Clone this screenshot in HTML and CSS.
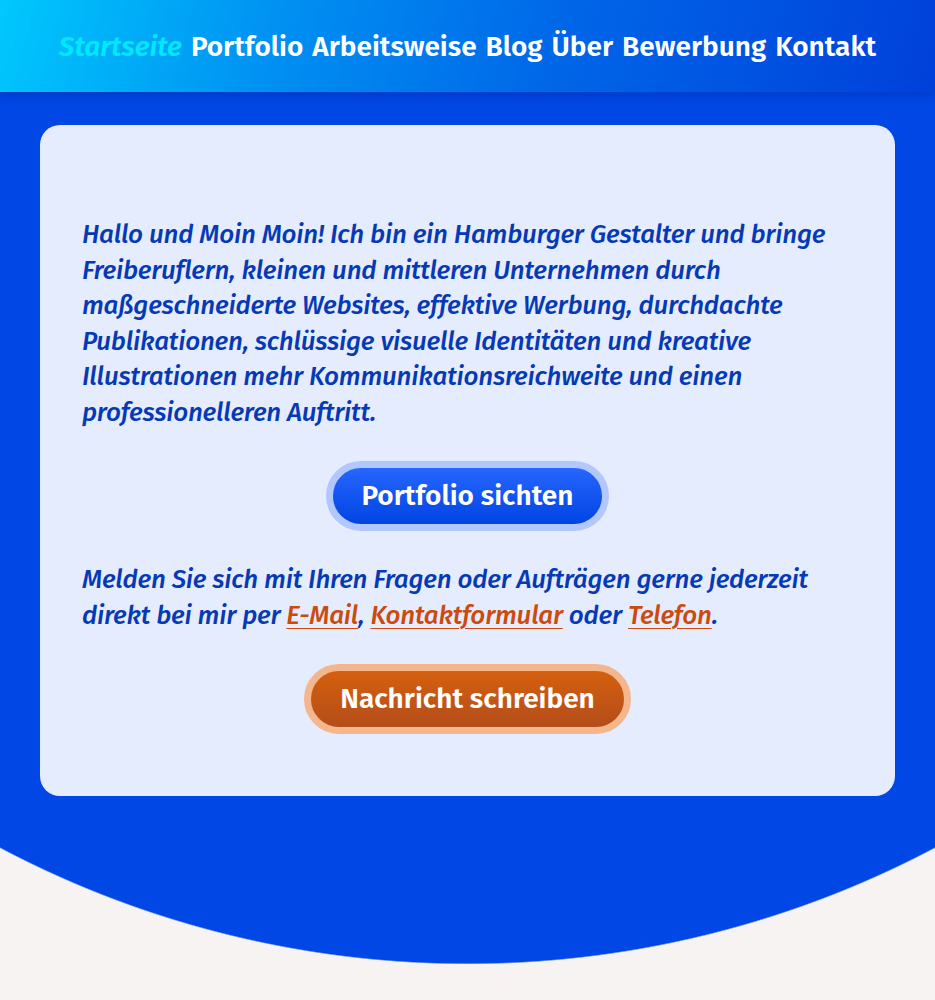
FILE: index.html
```html
<!DOCTYPE html>
<html lang="de">
<head>
<meta charset="utf-8">
<title>Startseite</title>
<link rel="stylesheet" href="styles.css">
</head>
<body>
<header class="site-header">
  <nav class="main-nav">
    <a class="nav-link is-active" href="#">Startseite</a>
    <a class="nav-link" href="#">Portfolio</a>
    <a class="nav-link" href="#">Arbeitsweise</a>
    <a class="nav-link" href="#">Blog</a>
    <a class="nav-link" href="#">Über</a>
    <a class="nav-link" href="#">Bewerbung</a>
    <a class="nav-link" href="#">Kontakt</a>
  </nav>
</header>
<main class="hero">
  <section class="intro-card">
    <p class="intro-text">Hallo und Moin Moin! Ich bin ein Hamburger Gestalter und bringe Freiberuflern, kleinen und mittleren Unternehmen durch maßgeschneiderte Websites, effektive Werbung, durchdachte Publikationen, schlüssige visuelle Identitäten und kreative Illustrationen mehr Kommunikationsreichweite und einen professionelleren Auftritt.</p>
    <a class="btn btn-blue" href="#">Portfolio sichten</a>
    <p class="intro-text">Melden Sie sich mit Ihren Fragen oder Aufträgen gerne jederzeit direkt bei mir per <a class="text-link" href="#">E-Mail</a>, <a class="text-link" href="#">Kontaktformular</a> oder <a class="text-link" href="#">Telefon</a>.</p>
    <a class="btn btn-orange" href="#">Nachricht schreiben</a>
  </section>
</main>
</body>
</html>
```

FILE: styles.css
```css
* { box-sizing: border-box; }

html, body {
  margin: 0;
  padding: 0;
}

body {
  background: #f7f3f2;
  font-family: "Fira Sans", "Open Sans", "Noto Sans", sans-serif;
}

.site-header {
  position: relative;
  z-index: 2;
  height: 92px;
  background: linear-gradient(105deg, #00c8fd 0%, #0090f2 30%, #0066e8 60%, #0040da 100%);
  box-shadow: 0 3px 10px rgba(0, 20, 90, 0.25);
  display: flex;
  align-items: center;
  justify-content: center;
}

.main-nav {
  display: flex;
  gap: 9px;
}

.nav-link {
  color: #ffffff;
  text-decoration: none;
  font-size: 28px;
  font-weight: 600;
}

.nav-link.is-active {
  color: #00e8ff;
  font-style: italic;
}

.hero {
  min-height: 908px;
  padding: 33px 40px;
  background: radial-gradient(circle 1000px at 50% -128px, #0047e5 999px, #f7f3f2 1000.5px);
}

.intro-card {
  background: #e5ecfe;
  border-radius: 20px;
  padding: 92px 42px 62px;
  display: flex;
  flex-direction: column;
  align-items: center;
  gap: 31px;
}

.intro-text {
  margin: 0;
  align-self: stretch;
  color: #0639b5;
  font-size: 26px;
  font-style: italic;
  font-weight: 500;
  line-height: 35.5px;
  letter-spacing: -0.22px;
}

.text-link {
  color: #cc4a0c;
  text-decoration: underline;
  text-decoration-thickness: 1px;
  text-underline-offset: 4px;
}

.btn {
  display: inline-flex;
  align-items: center;
  justify-content: center;
  height: 70px;
  padding: 0 29px 2px;
  border: 7px solid;
  border-radius: 35px;
  color: #ffffff;
  text-decoration: none;
  font-size: 28px;
  font-weight: 600;
}

.btn-blue {
  border-color: #b2c7fd;
  background: linear-gradient(180deg, #2766ff 0%, #0044e2 100%);
}

.btn-orange {
  border-color: #f4b68c;
  background: linear-gradient(180deg, #d5600d 0%, #b44d1b 100%);
}
```
